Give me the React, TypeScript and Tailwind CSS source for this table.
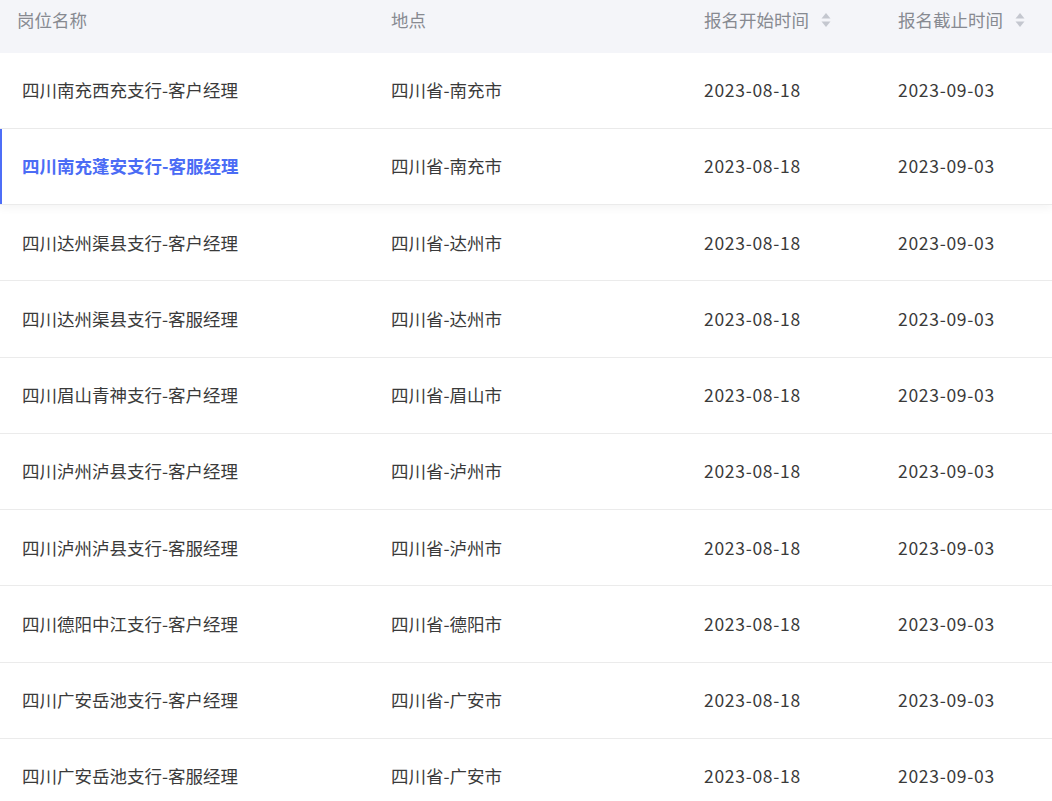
import React from 'react';

const rows = [
  { name: '四川南充西充支行-客户经理', place: '四川省-南充市' },
  { name: '四川南充蓬安支行-客服经理', place: '四川省-南充市' },
  { name: '四川达州渠县支行-客户经理', place: '四川省-达州市' },
  { name: '四川达州渠县支行-客服经理', place: '四川省-达州市' },
  { name: '四川眉山青神支行-客户经理', place: '四川省-眉山市' },
  { name: '四川泸州泸县支行-客户经理', place: '四川省-泸州市' },
  { name: '四川泸州泸县支行-客服经理', place: '四川省-泸州市' },
  { name: '四川德阳中江支行-客户经理', place: '四川省-德阳市' },
  { name: '四川广安岳池支行-客户经理', place: '四川省-广安市' },
  { name: '四川广安岳池支行-客服经理', place: '四川省-广安市' },
];

function SortIcon() {
  return (
    <svg width="10" height="16" viewBox="0 0 10 16" className="ml-[12px]">
      <path d="M5 1 L9.5 6.5 H0.5 Z" fill="#c4c7cf" />
      <path d="M5 15 L9.5 9.5 H0.5 Z" fill="#c4c7cf" />
    </svg>
  );
}

export default function App() {
  const active = 1;

  return (
    <div
      className="w-[1052px] min-h-[801px] bg-white text-[17.5px] overflow-hidden"
      style={{ fontFamily: '"Noto Sans CJK SC", "Noto Sans", sans-serif' }}
    >
      {/* 表头 */}
      <div className="flex h-[52.5px] bg-[#f4f5f9] text-[#878a91] pt-[8px]">
        <div className="w-[391px] pl-[17px] leading-[24px]">岗位名称</div>
        <div className="w-[313px] leading-[24px]">地点</div>
        <div className="w-[194px] flex items-start leading-[24px]">
          报名开始时间
          <span className="mt-[4px]">
            <SortIcon />
          </span>
        </div>
        <div className="flex-1 flex items-start leading-[24px]">
          报名截止时间
          <span className="mt-[4px]">
            <SortIcon />
          </span>
        </div>
      </div>

      {/* 列表 */}
      {rows.map((r, i) => (
        <div
          key={i}
          className={`relative flex items-center h-[76.25px] border-b border-[#ebebeb] ${
            i === active ? 'shadow-[0_4px_8px_rgba(0,0,0,0.04)] z-10' : ''
          }`}
        >
          {i === active && <div className="absolute left-0 top-0 bottom-0 w-[2px] bg-[#4d6ef7]" />}
          <div
            className={`w-[391px] pl-[22px] ${
              i === active ? 'text-[#4b6cf5] font-bold' : 'text-[#3a3a3a]'
            }`}
          >
            {r.name}
          </div>
          <div className="w-[313px] text-[#3a3a3a]">{r.place}</div>
          <div className="w-[194px] text-[#3a3a3a] tracking-[0.7px]">2023-08-18</div>
          <div className="flex-1 text-[#3a3a3a] tracking-[0.7px]">2023-09-03</div>
        </div>
      ))}
    </div>
  );
}
